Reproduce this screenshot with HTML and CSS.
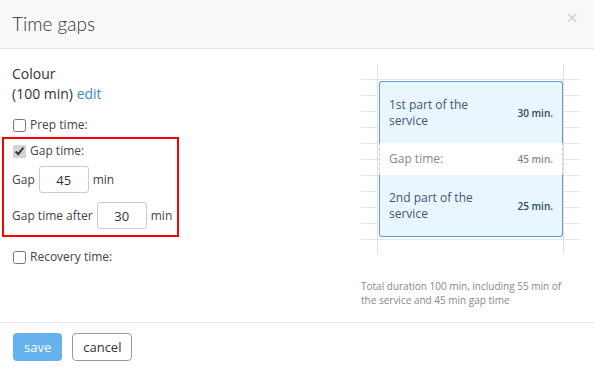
FILE: index.html
```html
<!DOCTYPE html>
<html lang="en">
<head>
    <meta charset="UTF-8">
    <meta name="viewport" content="width=device-width, initial-scale=1.0">
    <title>Time gaps</title>
    <link rel="stylesheet" href="styles.css">
</head>
<body>
    <div class="modal">
        <div class="modal-header">
            <div class="modal-title">Time gaps</div>
            <span class="close">&times;</span>
        </div>

        <div class="modal-body">
            <div class="settings">
                <div class="service-name">Colour</div>
                <div class="service-duration">(100 min) <a href="#" class="edit-link">edit</a></div>

                <label class="check-row prep-row">
                    <input type="checkbox"> Prep time:
                </label>

                <div class="gap-box">
                    <label class="check-row">
                        <input type="checkbox" checked> Gap time:
                    </label>
                    <div class="field-row gap-row">
                        <span>Gap</span>
                        <input type="text" class="num-input" value="45">
                        <span>min</span>
                    </div>
                    <div class="field-row after-row">
                        <span>Gap time after</span>
                        <input type="text" class="num-input" value="30">
                        <span>min</span>
                    </div>
                </div>

                <label class="check-row recovery-row">
                    <input type="checkbox"> Recovery time:
                </label>
            </div>

            <div class="preview">
                <div class="diagram">
                    <div class="diagram-col">
                        <div class="segment part first">
                            <span class="segment-name">1st part of the service</span>
                            <span class="segment-time">30 min.</span>
                        </div>
                        <div class="segment gap">
                            <span class="segment-name">Gap time:</span>
                            <span class="segment-time">45 min.</span>
                        </div>
                        <div class="segment part last">
                            <span class="segment-name">2nd part of the service</span>
                            <span class="segment-time">25 min.</span>
                        </div>
                    </div>
                </div>
                <p class="summary">Total duration 100 min, including 55 min of the service and 45 min gap time</p>
            </div>
        </div>

        <div class="modal-footer">
            <button class="btn btn-save">save</button>
            <button class="btn btn-cancel">cancel</button>
        </div>
    </div>
</body>
</html>
```

FILE: styles.css
```css
body {
    margin: 0;
    font-family: "Open Sans", Arial, sans-serif;
    color: #333;
    background-color: #fff;
}

.modal {
    width: 594px;
    height: 371px;
}

.modal-header {
    height: 48px;
    padding: 0 12px;
    display: flex;
    align-items: center;
    justify-content: space-between;
    background-color: #f9f9f9;
    border-bottom: 1px solid #e5e5e5;
}

.modal-title {
    font-family: Lato, "Open Sans", sans-serif;
    font-size: 19px;
    font-weight: 300;
    color: #333;
    padding-bottom: 2px;
}

.close {
    font-size: 20px;
    color: #d0d0d0;
    margin-right: 4px;
    margin-bottom: 14px;
}

.modal-body {
    height: 243px;
    padding: 15px 14px 15px 12px;
    display: flex;
    justify-content: space-between;
}

.settings {
    width: 300px;
}

.service-name,
.service-duration {
    font-size: 14px;
    line-height: 20px;
}

.edit-link {
    color: #3a8ad0;
    text-decoration: none;
}

.check-row {
    display: flex;
    align-items: center;
    font-size: 12px;
    line-height: 18px;
    color: #444;
}

.check-row input {
    width: 13px;
    height: 13px;
    margin: 0 4px 0 1px;
    accent-color: #d4d4d4;
}

.prep-row {
    margin-top: 12px;
}

.gap-box {
    width: 165px;
    margin: 3px 0 0 -10px;
    padding: 3px 0 6px 8px;
    border: 2px solid #f00;
}

.field-row {
    display: flex;
    align-items: center;
    gap: 4px;
    font-size: 12px;
    color: #444;
}

.gap-row {
    margin-top: 6px;
}

.after-row {
    margin-top: 9px;
}

.num-input {
    width: 50px;
    height: 27px;
    box-sizing: border-box;
    border: 1px solid #ccc;
    border-radius: 3px;
    font-family: "Open Sans", Arial, sans-serif;
    font-size: 13px;
    color: #333;
    text-align: center;
    padding: 0;
}

.recovery-row {
    margin-top: 11px;
}

.preview {
    width: 219px;
}

.diagram {
    height: 190px;
    background-image: repeating-linear-gradient(to bottom, transparent 0, transparent 15px, #e6e6e6 15px, #e6e6e6 16px);
}

.diagram-col {
    height: 100%;
    box-sizing: border-box;
    margin: 0 16px;
    padding-top: 17px;
    border-left: 1px solid #e0e0e0;
    border-right: 1px solid #e0e0e0;
}

.segment {
    margin-left: 1px;
    box-sizing: border-box;
    display: flex;
    align-items: center;
    justify-content: space-between;
    padding: 0 9px 0 9px;
}

.part {
    height: 62px;
    background-color: #eaf6fd;
    border-left: 1px solid #5a9fd2;
    border-right: 1px solid #5a9fd2;
    color: #3a5675;
}

.first {
    border-top: 1px solid #5a9fd2;
    border-radius: 3px 3px 0 0;
}

.last {
    border-bottom: 1px solid #5a9fd2;
    border-radius: 0 0 3px 3px;
}

.gap {
    height: 32px;
    background-color: #fff;
    border-left: 1px dashed #c8c8c8;
    border-right: 1px dashed #c8c8c8;
    color: #888;
}

.segment-name {
    width: 95px;
    font-size: 12px;
    line-height: 16px;
}

.segment-time {
    font-size: 10px;
    font-weight: 600;
}

.part .segment-time {
    color: #2c4765;
}

.summary {
    width: 208px;
    margin: 25px 0 0 0;
    font-size: 10px;
    line-height: 14px;
    color: #888;
}

.modal-footer {
    border-top: 1px solid #e5e5e5;
    padding: 10px 13px;
    display: flex;
    gap: 10px;
}

.btn {
    height: 28px;
    font-family: "Open Sans", Arial, sans-serif;
    font-size: 13px;
    border-radius: 4px;
    cursor: pointer;
}

.btn-save {
    padding: 0 11px;
    background-color: #66b2ef;
    color: #fff;
    border: none;
}

.btn-cancel {
    padding: 0 10px;
    background-color: #fff;
    color: #333;
    border: 1px solid #999;
}
```
